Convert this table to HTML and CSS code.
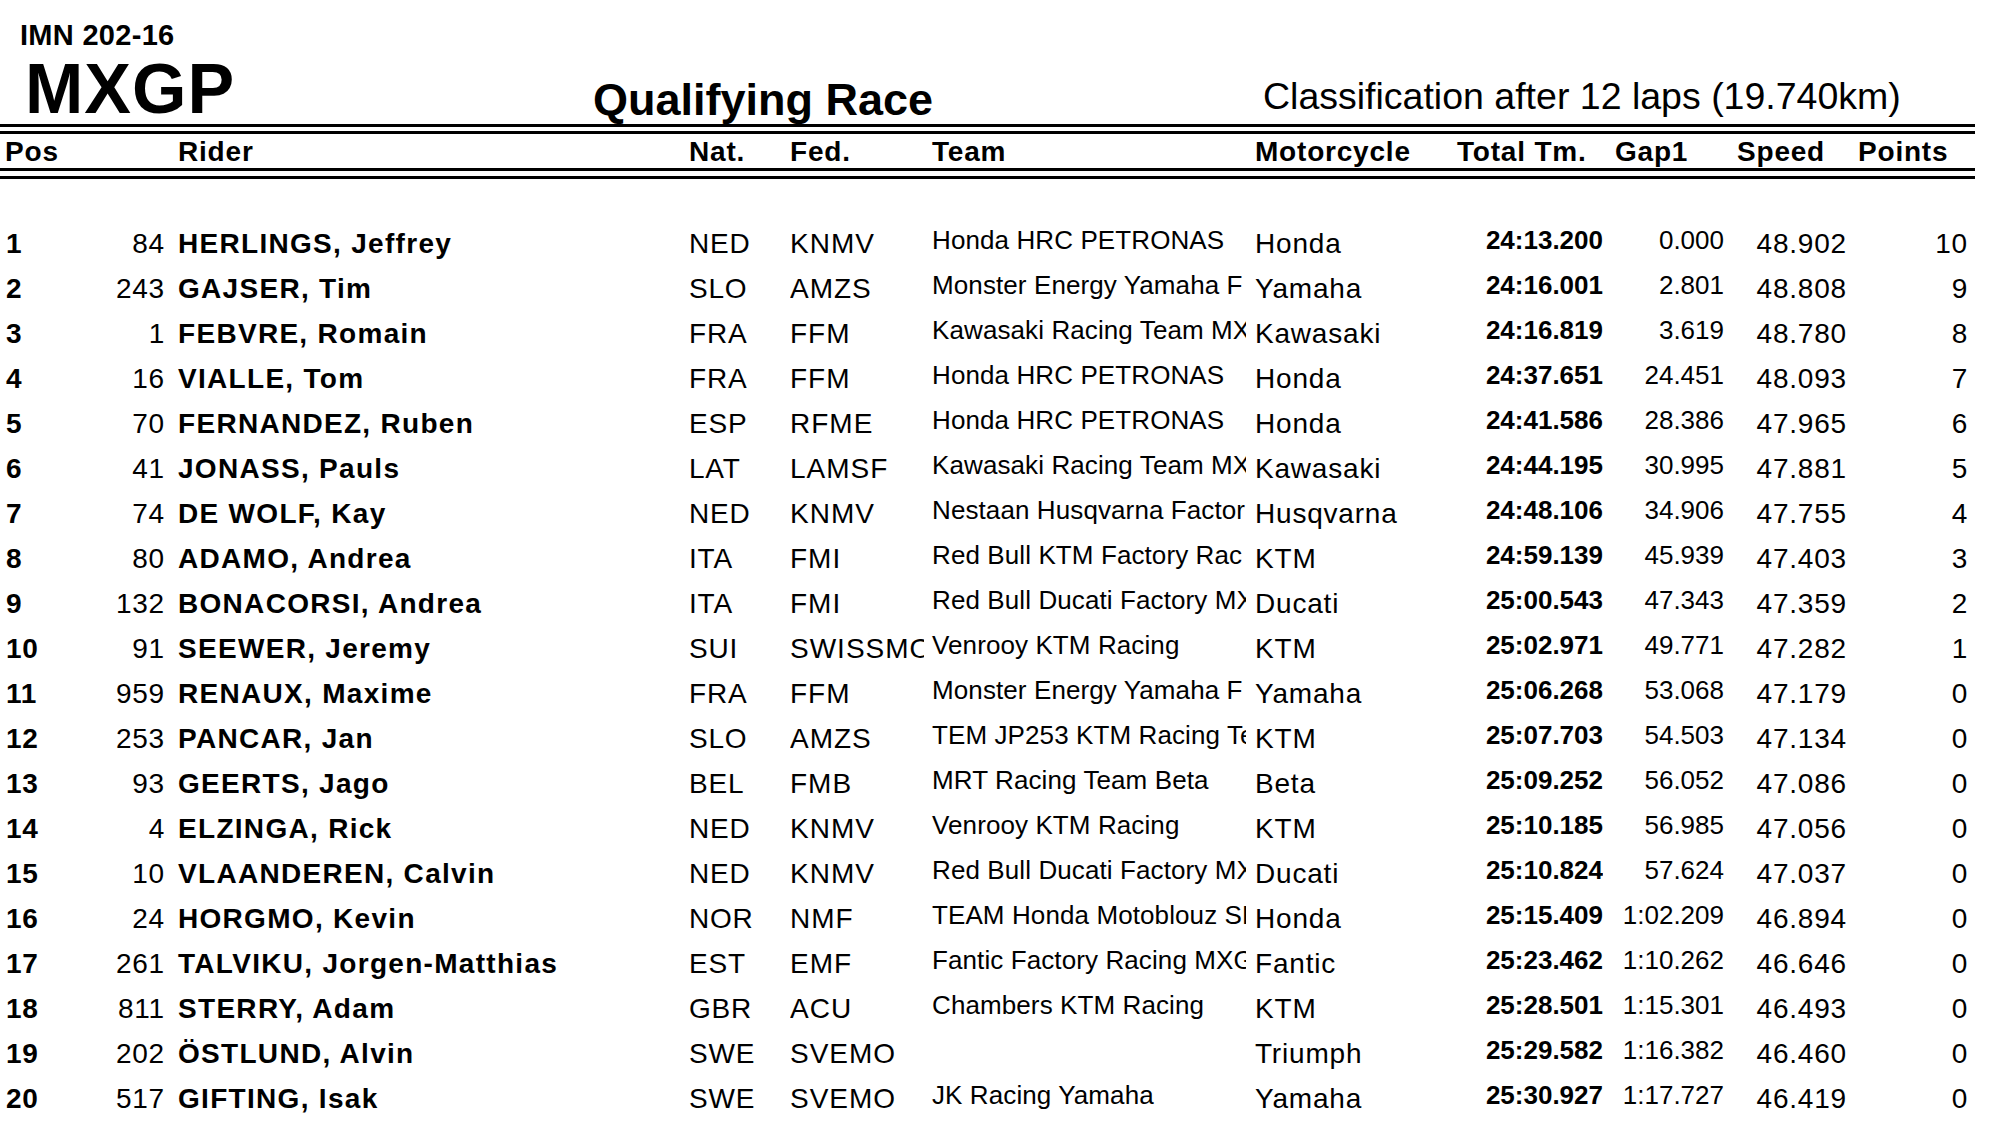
FILE: index.html
```html
<!DOCTYPE html>
<html lang="en">
<head>
<meta charset="utf-8">
<title>MXGP Qualifying Race</title>
<link rel="stylesheet" href="styles.css">
</head>
<body>
<div class="page">
  <div class="top">
    <div class="brand">
      <div class="code">IMN 202-16</div>
      <div class="series">MXGP</div>
    </div>
    <div class="race">Qualifying Race</div>
    <div class="classif">Classification after 12 laps (19.740km)</div>
  </div>
  <div class="rule rule-a"></div>
  <div class="row head">
    <div class="c pos">Pos</div>
    <div class="c no"></div>
    <div class="c name">Rider</div>
    <div class="c nat">Nat.</div>
    <div class="c fed">Fed.</div>
    <div class="c team">Team</div>
    <div class="c moto">Motorcycle</div>
    <div class="c tot">Total Tm.</div>
    <div class="c gap">Gap1</div>
    <div class="c spd">Speed</div>
    <div class="c pts">Points</div>
  </div>
  <div class="rule rule-b"></div>
  <div class="body">
    <div class="row"><div class="c pos">1</div><div class="c no">84</div><div class="c name">HERLINGS, Jeffrey</div><div class="c nat">NED</div><div class="c fed">KNMV</div><div class="c team">Honda HRC PETRONAS</div><div class="c moto">Honda</div><div class="c tot">24:13.200</div><div class="c gap">0.000</div><div class="c spd">48.902</div><div class="c pts">10</div></div>
    <div class="row"><div class="c pos">2</div><div class="c no">243</div><div class="c name">GAJSER, Tim</div><div class="c nat">SLO</div><div class="c fed">AMZS</div><div class="c team">Monster Energy Yamaha F</div><div class="c moto">Yamaha</div><div class="c tot">24:16.001</div><div class="c gap">2.801</div><div class="c spd">48.808</div><div class="c pts">9</div></div>
    <div class="row"><div class="c pos">3</div><div class="c no">1</div><div class="c name">FEBVRE, Romain</div><div class="c nat">FRA</div><div class="c fed">FFM</div><div class="c team">Kawasaki Racing Team MX</div><div class="c moto">Kawasaki</div><div class="c tot">24:16.819</div><div class="c gap">3.619</div><div class="c spd">48.780</div><div class="c pts">8</div></div>
    <div class="row"><div class="c pos">4</div><div class="c no">16</div><div class="c name">VIALLE, Tom</div><div class="c nat">FRA</div><div class="c fed">FFM</div><div class="c team">Honda HRC PETRONAS</div><div class="c moto">Honda</div><div class="c tot">24:37.651</div><div class="c gap">24.451</div><div class="c spd">48.093</div><div class="c pts">7</div></div>
    <div class="row"><div class="c pos">5</div><div class="c no">70</div><div class="c name">FERNANDEZ, Ruben</div><div class="c nat">ESP</div><div class="c fed">RFME</div><div class="c team">Honda HRC PETRONAS</div><div class="c moto">Honda</div><div class="c tot">24:41.586</div><div class="c gap">28.386</div><div class="c spd">47.965</div><div class="c pts">6</div></div>
    <div class="row"><div class="c pos">6</div><div class="c no">41</div><div class="c name">JONASS, Pauls</div><div class="c nat">LAT</div><div class="c fed">LAMSF</div><div class="c team">Kawasaki Racing Team MX</div><div class="c moto">Kawasaki</div><div class="c tot">24:44.195</div><div class="c gap">30.995</div><div class="c spd">47.881</div><div class="c pts">5</div></div>
    <div class="row"><div class="c pos">7</div><div class="c no">74</div><div class="c name">DE WOLF, Kay</div><div class="c nat">NED</div><div class="c fed">KNMV</div><div class="c team">Nestaan Husqvarna Factor</div><div class="c moto">Husqvarna</div><div class="c tot">24:48.106</div><div class="c gap">34.906</div><div class="c spd">47.755</div><div class="c pts">4</div></div>
    <div class="row"><div class="c pos">8</div><div class="c no">80</div><div class="c name">ADAMO, Andrea</div><div class="c nat">ITA</div><div class="c fed">FMI</div><div class="c team">Red Bull KTM Factory Rac</div><div class="c moto">KTM</div><div class="c tot">24:59.139</div><div class="c gap">45.939</div><div class="c spd">47.403</div><div class="c pts">3</div></div>
    <div class="row"><div class="c pos">9</div><div class="c no">132</div><div class="c name">BONACORSI, Andrea</div><div class="c nat">ITA</div><div class="c fed">FMI</div><div class="c team">Red Bull Ducati Factory MX</div><div class="c moto">Ducati</div><div class="c tot">25:00.543</div><div class="c gap">47.343</div><div class="c spd">47.359</div><div class="c pts">2</div></div>
    <div class="row"><div class="c pos">10</div><div class="c no">91</div><div class="c name">SEEWER, Jeremy</div><div class="c nat">SUI</div><div class="c fed">SWISSMO</div><div class="c team">Venrooy KTM Racing</div><div class="c moto">KTM</div><div class="c tot">25:02.971</div><div class="c gap">49.771</div><div class="c spd">47.282</div><div class="c pts">1</div></div>
    <div class="row"><div class="c pos">11</div><div class="c no">959</div><div class="c name">RENAUX, Maxime</div><div class="c nat">FRA</div><div class="c fed">FFM</div><div class="c team">Monster Energy Yamaha F</div><div class="c moto">Yamaha</div><div class="c tot">25:06.268</div><div class="c gap">53.068</div><div class="c spd">47.179</div><div class="c pts">0</div></div>
    <div class="row"><div class="c pos">12</div><div class="c no">253</div><div class="c name">PANCAR, Jan</div><div class="c nat">SLO</div><div class="c fed">AMZS</div><div class="c team">TEM JP253 KTM Racing Te</div><div class="c moto">KTM</div><div class="c tot">25:07.703</div><div class="c gap">54.503</div><div class="c spd">47.134</div><div class="c pts">0</div></div>
    <div class="row"><div class="c pos">13</div><div class="c no">93</div><div class="c name">GEERTS, Jago</div><div class="c nat">BEL</div><div class="c fed">FMB</div><div class="c team">MRT Racing Team Beta</div><div class="c moto">Beta</div><div class="c tot">25:09.252</div><div class="c gap">56.052</div><div class="c spd">47.086</div><div class="c pts">0</div></div>
    <div class="row"><div class="c pos">14</div><div class="c no">4</div><div class="c name">ELZINGA, Rick</div><div class="c nat">NED</div><div class="c fed">KNMV</div><div class="c team">Venrooy KTM Racing</div><div class="c moto">KTM</div><div class="c tot">25:10.185</div><div class="c gap">56.985</div><div class="c spd">47.056</div><div class="c pts">0</div></div>
    <div class="row"><div class="c pos">15</div><div class="c no">10</div><div class="c name">VLAANDEREN, Calvin</div><div class="c nat">NED</div><div class="c fed">KNMV</div><div class="c team">Red Bull Ducati Factory MX</div><div class="c moto">Ducati</div><div class="c tot">25:10.824</div><div class="c gap">57.624</div><div class="c spd">47.037</div><div class="c pts">0</div></div>
    <div class="row"><div class="c pos">16</div><div class="c no">24</div><div class="c name">HORGMO, Kevin</div><div class="c nat">NOR</div><div class="c fed">NMF</div><div class="c team">TEAM Honda Motoblouz SR</div><div class="c moto">Honda</div><div class="c tot">25:15.409</div><div class="c gap">1:02.209</div><div class="c spd">46.894</div><div class="c pts">0</div></div>
    <div class="row"><div class="c pos">17</div><div class="c no">261</div><div class="c name">TALVIKU, Jorgen-Matthias</div><div class="c nat">EST</div><div class="c fed">EMF</div><div class="c team">Fantic Factory Racing MXG</div><div class="c moto">Fantic</div><div class="c tot">25:23.462</div><div class="c gap">1:10.262</div><div class="c spd">46.646</div><div class="c pts">0</div></div>
    <div class="row"><div class="c pos">18</div><div class="c no">811</div><div class="c name">STERRY, Adam</div><div class="c nat">GBR</div><div class="c fed">ACU</div><div class="c team">Chambers KTM Racing</div><div class="c moto">KTM</div><div class="c tot">25:28.501</div><div class="c gap">1:15.301</div><div class="c spd">46.493</div><div class="c pts">0</div></div>
    <div class="row"><div class="c pos">19</div><div class="c no">202</div><div class="c name">ÖSTLUND, Alvin</div><div class="c nat">SWE</div><div class="c fed">SVEMO</div><div class="c team"></div><div class="c moto">Triumph</div><div class="c tot">25:29.582</div><div class="c gap">1:16.382</div><div class="c spd">46.460</div><div class="c pts">0</div></div>
    <div class="row"><div class="c pos">20</div><div class="c no">517</div><div class="c name">GIFTING, Isak</div><div class="c nat">SWE</div><div class="c fed">SVEMO</div><div class="c team">JK Racing Yamaha</div><div class="c moto">Yamaha</div><div class="c tot">25:30.927</div><div class="c gap">1:17.727</div><div class="c spd">46.419</div><div class="c pts">0</div></div>
  </div>
</div>
</body>
</html>
```

FILE: styles.css
```css
html, body {
  margin: 0;
  padding: 0;
  background: #ffffff;
}

body {
  font-family: "Liberation Sans", Arial, sans-serif;
  color: #000000;
  width: 2000px;
  height: 1125px;
  overflow: hidden;
}

.page {
  width: 1975px;
}

/* ---------- title block ---------- */
.top {
  height: 124px;
  display: grid;
  grid-template-columns: 593px 670px 1fr;
  align-items: start;
}

.brand {
  padding-top: 18px;
}

.code {
  font-size: 29px;
  font-weight: bold;
  line-height: 34px;
  letter-spacing: 0.3px;
  margin-left: 20px;
  white-space: nowrap;
}

.series {
  font-size: 70px;
  font-weight: bold;
  line-height: 70px;
  letter-spacing: 1px;
  margin-top: 2px;
  margin-left: 25px;
  white-space: nowrap;
}

.race {
  padding-top: 75px;
  font-size: 45px;
  font-weight: bold;
  line-height: 50px;
  white-space: nowrap;
}

.classif {
  padding-top: 74px;
  font-size: 37.5px;
  line-height: 44px;
  white-space: nowrap;
}

/* ---------- rules ---------- */
.rule {
  border-top: 3px solid #000;
  border-bottom: 3px solid #000;
}

.rule-a {
  height: 4px;
}

.rule-b {
  height: 5px;
  margin-bottom: 42px;
}

/* ---------- table grid ---------- */
.row {
  display: grid;
  grid-template-columns: 100px 65px 524px 101px 134px 322px 194px 163px 121px 123px 121px;
  height: 45px;
  align-items: start;
  font-size: 28px;
  line-height: 45px;
  letter-spacing: 0.8px;
  white-space: nowrap;
}

.c {
  overflow: hidden;
}

.pos {
  padding-left: 6px;
  font-weight: bold;
}

.no {
  text-align: right;
}

.name {
  padding-left: 13px;
  font-weight: bold;
  letter-spacing: 1.3px;
  overflow: visible;
}

.fed {
  letter-spacing: 1px;
}

.team {
  padding-left: 8px;
  font-size: 26px;
  line-height: 38px;
  letter-spacing: 0.1px;
}

.moto {
  padding-left: 9px;
}

.tot {
  text-align: right;
  font-weight: bold;
  font-size: 26px;
  line-height: 38px;
  letter-spacing: 0;
}

.gap {
  text-align: right;
  font-size: 26px;
  line-height: 38px;
  letter-spacing: 0;
}

.spd {
  text-align: right;
}

.pts {
  text-align: right;
}

/* ---------- header row ---------- */
.row.head {
  height: 34px;
  line-height: 32px;
  font-weight: bold;
}

.head .c {
  padding-top: 2px;
  font-size: 28px;
  line-height: 32px;
  letter-spacing: 0.8px;
  font-weight: bold;
  text-align: left;
}

.head .pos {
  padding-left: 5px;
}

.head .name {
  padding-left: 13px;
}

.head .team {
  padding-left: 8px;
}

.head .tot {
  padding-left: 17px;
  overflow: visible;
}

.head .gap {
  padding-left: 12px;
}

.head .spd {
  padding-left: 13px;
}

.head .pts {
  padding-left: 11px;
  overflow: visible;
}
```
